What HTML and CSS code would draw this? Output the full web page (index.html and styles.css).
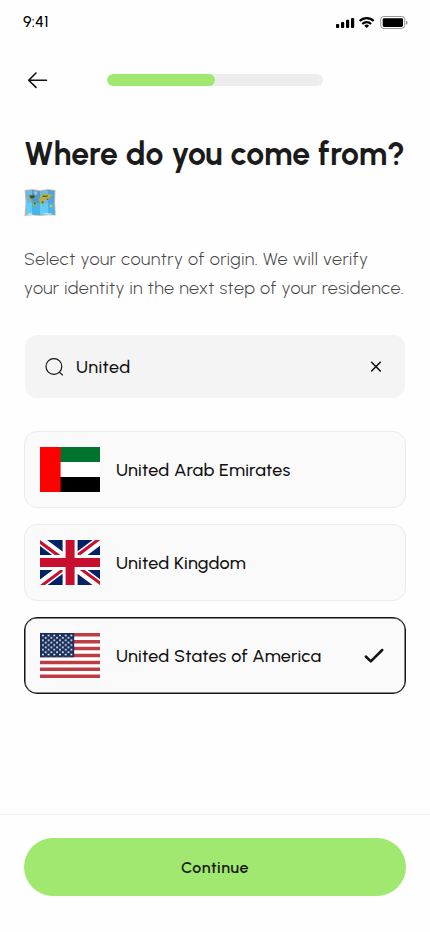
FILE: index.html
```html
<!DOCTYPE html>
<html lang="en">
<head>
<meta charset="utf-8">
<meta name="viewport" content="width=device-width, initial-scale=1">
<title>Country of origin</title>
<link rel="stylesheet" href="styles.css">
</head>
<body>
<div class="screen">
  <header class="status">
    <span class="time">9:41</span>
    <svg class="status-icons" width="72" height="16" viewBox="0 0 72 16" aria-hidden="true">
      <g fill="#000">
        <rect x="0" y="9" width="3.2" height="4" rx=".9"/>
        <rect x="5" y="7" width="3.2" height="6" rx=".9"/>
        <rect x="10" y="4.8" width="3.2" height="8.2" rx=".9"/>
        <rect x="15" y="3" width="3.2" height="10" rx=".9"/>
      </g>
      <g fill="none" stroke="#000" stroke-width="2.1">
        <path d="M23.7 6.1a9.8 9.8 0 0 1 14 0"/>
        <path d="M26.3 9a6.2 6.2 0 0 1 8.8 0"/>
      </g>
      <path d="M30.7 13.1l-2.4-2.4a3.5 3.5 0 0 1 4.8 0z" fill="#000"/>
      <rect x="44.7" y="1.5" width="24" height="12" rx="3" fill="none" stroke="#000" stroke-opacity=".4"/>
      <rect x="46.7" y="3.2" width="20.3" height="8.7" rx="1.4" fill="#000"/>
      <path d="M70 5.8v4c1.1-.5 1.5-1.1 1.5-2s-.4-1.500-1.500-2z" fill="#000" fill-opacity=".45"/>
    </svg>
  </header>

  <nav class="topbar">
    <svg class="back" width="28" height="28" viewBox="0 0 28 28" fill="none" stroke="#111" stroke-width="1.6" stroke-linecap="round" stroke-linejoin="round"><path d="M22.500 14.200H4.700M12 7L4.700 14.200l7.300 7.200"/></svg>
    <div class="progress"><div class="progress-fill"></div></div>
  </nav>

  <main class="content">
    <h1 class="title">Where do you come from?</h1>
    <svg class="map" width="32" height="30" viewBox="0 0 32 30" aria-hidden="true">
      <path d="M.6 2L8 1l8 1.300L24 .9l7.500 1.200-.4 12.900.7 12.600L24 27.200l-8 .8-8-.7-7.500.8L1.500 15z" fill="#dcb5a0"/>
      <path d="M1.600 2.700L8 1.900v24.500l-6.200.6L2.400 15z" fill="#6bb9e8"/>
      <path d="M8 1.900l8 1.300V27l-8-.6z" fill="#4d9dd1"/>
      <path d="M16 3.200l8-1.400v24.500l-8 .7z" fill="#69b9e8"/>
      <path d="M24 1.800l6.500 1.100-.4 12 .6 11.900-6.700-.5z" fill="#4da5db"/>
      <path d="M2 15h6v11.400L2 27zM16 15h8v11.300l-8 .7z" fill="#62ccf5"/>
      <path d="M8 15h8v12l-8-.6zM24 15h6l.6 11.700-6.600-.4z" fill="#47b4ea"/>
      <path d="M2.800 7.600l3-.6 2.400.5 1.800-.3 1.700 1-.6 1.300-1.700.5-1.500 1.600.2 1.400 1.900 1.200-.4.600-2.600-1.300-1-2.300L5 8.900z" fill="#a5a348"/>
      <path d="M5.500 7.400l4-.2 1.600.8-1.500 2.200-2.900.2z" fill="#2c5145"/>
      <path d="M9.500 3.700l4.200-.5-.8 3.300-1.800.8z" fill="#a9bed3"/>
      <path d="M9.800 14.300l3 1.300-.6 2.300-1.300 2.300-.6-2.200-1.100-1.800z" fill="#b6a93c"/>
      <path d="M10 14.300l1.700.6-.5 1.600-1.200-.3z" fill="#31623a"/>
      <path d="M15.800 9.500l1-2.200 3.200-1.500 3.500-.1 5 1.200-1 1.600-1.500.4-.6 2-1.800 1-.7 1.700-1.500-1.800-1.300.8-.4 3.200-1.300 2.500-.9-3.100-2.300-1.600-.6-2z" fill="#b9ae4c"/>
      <path d="M18 8.500l2-1.300 1.600.7 2.600-.8-1 1.700-3.700.3zM17.600 13.300l2 .5-.5 2-1.200-.8zM22.500 11l2-.4-.6 1.700z" fill="#38652f"/>
      <path d="M26 17.300l1.700-1 .8 2.300-1.300 1-1.200-.7z" fill="#dfbd61"/>
      <path d="M3.500 26l3-.7 1.500.4 1 .7-5.500.3zM18 25.800l4-.6 5 .3 2 .8-4 .3z" fill="#d9edf7"/>
    </svg>
    <p class="lead"><span class="line first">Select your country of origin. We will verify</span><span class="line">your identity in the next step of your residence.</span></p>

    <div class="search">
      <svg width="20" height="20" viewBox="0 0 20 20" fill="none" stroke="#111" stroke-width="1.15" stroke-linecap="round"><circle cx="8.900" cy="9.500" r="7.900"/><path d="M14.600 15.300l2.900 2.700"/></svg>
      <span class="query">United</span>
      <svg class="clear" width="12" height="12" viewBox="0 0 12 12" stroke="#111" stroke-width="1.600" stroke-linecap="round"><path d="M1.600 1.300l8.700 8.700M10.300 1.300l-8.700 8.700"/></svg>
    </div>

    <div class="list">
      <div class="card">
        <svg class="flag" viewBox="0 0 60 45"><path fill="#00732f" d="M20 0h40v15H20z"/><path fill="#fff" d="M20 15h40v15H20z"/><path d="M20 30h40v15H20z"/><path fill="red" d="M0 0h20.600v45H0z"/></svg>
        <span class="name">United Arab Emirates</span>
      </div>
      <div class="card">
        <svg class="flag" viewBox="0 0 640 480"><path fill="#012169" d="M0 0h640v480H0z"/><path fill="#FFF" d="m75 0 244 181L562 0h78v62L400 241l240 178v61h-80L320 301 81 480H0v-60l239-178L0 64V0z"/><path fill="#C8102E" d="m424 281 216 159v40L369 281zm-184 20 6 35L54 480H0zM640 0v3L391 191l2-44L590 0zM0 0l239 176h-60L0 42z"/><path fill="#FFF" d="M241 0v480h160V0zM0 160v160h640V160z"/><path fill="#C8102E" d="M0 193v96h640v-96zM273 0v480h96V0z"/></svg>
        <span class="name">United Kingdom</span>
      </div>
      <div class="card selected">
        <svg class="flag" viewBox="0 0 60 45">
          <defs>
            <pattern id="stars" width="5.700" height="4.800" patternUnits="userSpaceOnUse">
              <g fill="#fff"><circle cx="2.900" cy="2.400" r=".95"/><circle cx="5.700" cy="4.800" r=".95"/><circle cx="0" cy="4.800" r=".95"/><circle cx="5.700" cy="0" r=".95"/><circle cx="0" cy="0" r=".95"/></g>
            </pattern>
          </defs>
          <path fill="#fff" d="M0 0h60v45H0z"/>
          <path stroke="#bd3d44" stroke-width="3.460" d="M0 1.730h60M0 8.650h60M0 15.570h60M0 22.500h60M0 29.420h60M0 36.340h60M0 43.270h60"/>
          <path fill="#192f5d" d="M0 0h34.200v24.230H0z"/>
          <path fill="url(#stars)" d="M1.500 1.200h31.500v22H1.500z"/>
        </svg>
        <span class="name">United States of America</span>
        <svg class="check" width="20" height="16" viewBox="0 0 20 16" fill="none" stroke="#111" stroke-width="2.500" stroke-linecap="round" stroke-linejoin="round"><path d="M1.800 8.500l5 4.900L18.200 2"/></svg>
      </div>
    </div>
  </main>

  <footer class="footer">
    <button class="continue" type="button"><span>Continue</span></button>
  </footer>
</div>
</body>
</html>
```

FILE: styles.css
```css
* { box-sizing: border-box; }
body {
  margin: 0;
  background: #fefefe;
  color: #1b1b1b;
  font-family: Urbanist, Lato, "Liberation Sans", sans-serif;
}
.screen { width: 430px; height: 932px; display: flex; flex-direction: column; overflow: hidden; }
.status {
  height: 44px;
  padding: 0 22px 0 23px;
  display: flex;
  align-items: center;
  justify-content: space-between;
}
.time { font-size: 16px; font-weight: 550; line-height: 20px; color: #000; letter-spacing: .2px; }
.status-icons { margin: 2px 0 0; }
.topbar { height: 72px; padding: 0 24px; display: flex; align-items: center; gap: 55px; }
.back { flex: none; }
.progress { width: 216px; height: 12px; border-radius: 6px; background: #ededed; overflow: hidden; }
.progress-fill { width: 50%; height: 100%; border-radius: 6px; background: #a0e870; }
.content { padding: 13px 24px 0; flex: 1; }
.title { margin: 0; font-size: 32px; line-height: 51px; font-weight: 700; white-space: nowrap; letter-spacing: .09px; }
.map { display: block; margin-top: 8px; }
.lead { margin: 27px 0 0; font-size: 18px; line-height: 29px; font-weight: 330; color: #454545; letter-spacing: .39px; }
.line { display: block; white-space: nowrap; }
.first { letter-spacing: .45px; }
.search {
  margin: 32px 1px 0;
  height: 63px;
  padding: 0 23px 0 20px;
  border-radius: 12px;
  background: #f4f4f4;
  display: flex;
  align-items: center;
}
.query { flex: 1; margin-left: 11px; font-size: 18px; font-weight: 550; letter-spacing: .4px; color: #111; }
.list { margin-top: 33px; display: flex; flex-direction: column; gap: 16px; }
.card {
  height: 77px;
  padding: 0 21px 0 15px;
  border: 1px solid #ebebeb;
  border-radius: 13px;
  background: #fafafa;
  display: flex;
  align-items: center;
}
.card.selected { border-color: #11131a; box-shadow: inset 0 0 0 .5px #11131a; }
.flag { width: 60px; height: 45px; flex: none; }
.name { flex: 1; margin-left: 16px; font-size: 18px; font-weight: 530; letter-spacing: .22px; white-space: nowrap; color: #111; }
.footer { height: 118px; border-top: 1px solid #f2f2f2; padding: 23px 24px 0; }
.continue {
  width: 100%;
  height: 58px;
  padding: 2px 0 0;
  border: 0;
  border-radius: 29px;
  background: #a0e870;
  color: #1b1b1b;
  font: 650 16px/20px Urbanist, Lato, "Liberation Sans", sans-serif;
  letter-spacing: .55px;
}
```
